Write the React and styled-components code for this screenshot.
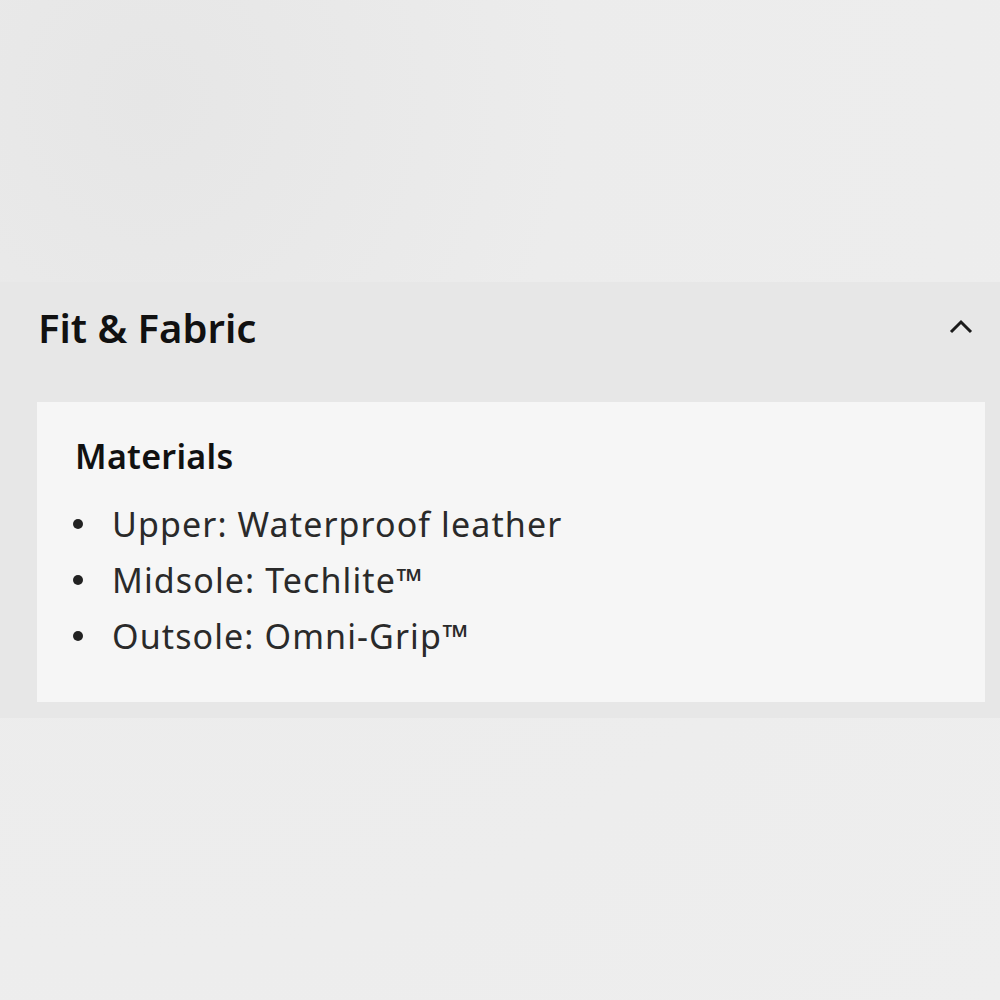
import React from "react";
import styled, { createGlobalStyle } from "styled-components";

const GlobalStyle = createGlobalStyle`
  body {
    margin: 0;
    font-family: "Noto Sans", "Open Sans", "Liberation Sans", sans-serif;
    background: #ececec;
  }
`;

const Page = styled.div`
  min-height: 1000px;
  padding-top: 282px;
  box-sizing: border-box;
  background: radial-gradient(ellipse at 15% 10%, #e6e6e6 0%, #ececec 35%, #eeeeee 100%);
`;

const Section = styled.section`
  background: #e7e7e7;
  padding: 0 15px 16px 37px;
`;

const Header = styled.button`
  display: flex;
  align-items: center;
  justify-content: space-between;
  width: 100%;
  height: 90px;
  padding: 0 12px 0 1px;
  border: none;
  background: transparent;
  cursor: pointer;
  font-family: inherit;
`;

const Title = styled.h2`
  margin: 0;
  font-size: 40px;
  font-weight: 600;
  color: #111;
`;

const Panel = styled.div`
  margin-top: 30px;
  height: 300px;
  box-sizing: border-box;
  background: #f6f6f6;
  padding: 31px 38px;
`;

const SubTitle = styled.h3`
  margin: 0 0 17px;
  font-size: 34px;
  font-weight: 600;
  color: #111;
  letter-spacing: 0.3px;
`;

const List = styled.ul`
  margin: 0;
  padding: 0;
  list-style: none;
`;

const Item = styled.li`
  position: relative;
  font-size: 34px;
  line-height: 56px;
  color: #2a2a2a;
  padding-left: 37px;
  letter-spacing: 1.1px;

  &::before {
    content: "";
    position: absolute;
    left: -2px;
    top: 23px;
    width: 10px;
    height: 10px;
    border-radius: 50%;
    background: #222;
  }
`;

const Chevron = () => (
  <svg width="24" height="16" viewBox="0 0 24 16" fill="none">
    <path d="M2 13 L12 3 L22 13" stroke="#1a1a1a" strokeWidth="3" />
  </svg>
);

export default function App() {
  return (
    <>
      <GlobalStyle />
      <Page>
        <Section>
          <Header>
            <Title>Fit &amp; Fabric</Title>
            <Chevron />
          </Header>
          <Panel>
            <SubTitle>Materials</SubTitle>
            <List>
              <Item>Upper: Waterproof leather</Item>
              <Item>Midsole: Techlite™</Item>
              <Item>Outsole: Omni-Grip™</Item>
            </List>
          </Panel>
        </Section>
      </Page>
    </>
  );
}
